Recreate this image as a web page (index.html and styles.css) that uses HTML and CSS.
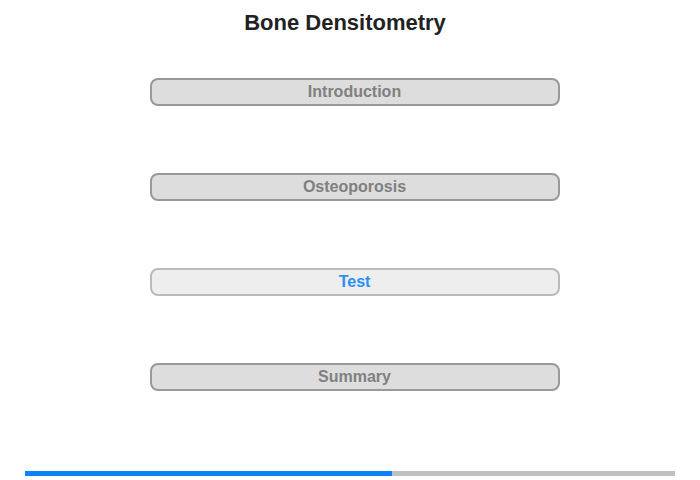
FILE: index.html
```html
<!DOCTYPE html>
<html lang="en">
<head>
  <meta charset="UTF-8">
  <meta name="viewport" content="width=device-width, initial-scale=1.0">
  <title>Bone Densitometry</title>
  <link rel="stylesheet" href="styles.css">
</head>
<body>
  <h1>Bone Densitometry</h1>

  <div class="menu">
    <button class="item">Introduction</button>
    <button class="item">Osteoporosis</button>
    <button class="item current">Test</button>
    <button class="item">Summary</button>
  </div>

  <div class="progress">
    <div class="progress-fill" style="width: 56.5%"></div>
  </div>
</body>
</html>
```

FILE: styles.css
```css
body {
  font-family: "Liberation Sans", Arial, sans-serif;
  background-color: #fff;
  margin: 0;
  width: 700px;
  height: 480px;
  display: flex;
  flex-direction: column;
  align-items: center;
}
h1 {
  font-size: 22px;
  line-height: 24px;
  color: #222;
  margin: 11px 0 0 -10px;
}
.menu {
  display: flex;
  flex-direction: column;
  gap: 67px;
  margin-top: 43px;
}
.item {
  width: 410px;
  height: 28px;
  margin-left: 9px;
  border: 2px solid #999;
  border-radius: 8px;
  background-color: #ddd;
  color: #808080;
  font-family: "Liberation Sans", Arial, sans-serif;
  font-size: 16px;
  font-weight: bold;
  padding: 0;
}
.item.current {
  background-color: #eee;
  border-color: #bbb;
  color: #2b8ff5;
}
.progress {
  width: 650px;
  height: 5px;
  background-color: #c0c0c0;
  margin-top: 80px;
}
.progress-fill {
  height: 100%;
  background-color: #0a84f5;
}
```
